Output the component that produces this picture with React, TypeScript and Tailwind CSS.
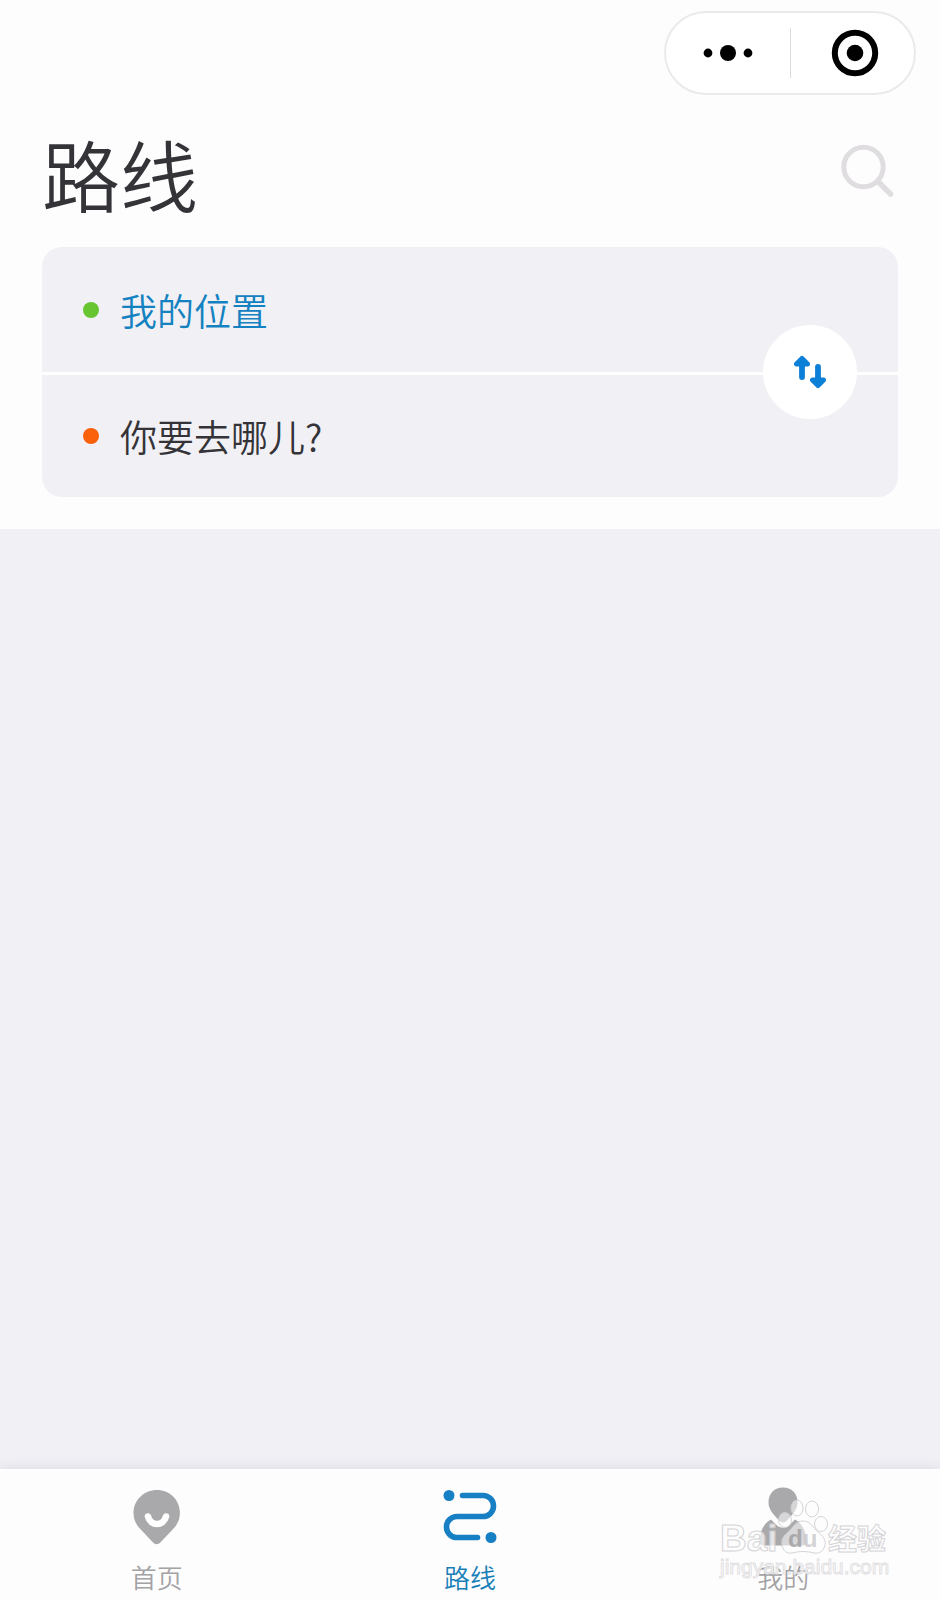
import { useState } from "react";
import type { ReactNode } from "react";

function HomeIcon() {
  return (
    <svg viewBox="0 0 56 60" className="h-15 w-14" aria-hidden="true">
      <path
        d="M28 3C15 3 4.500 13 4.500 26c0 6.500 2.600 11.800 7 16.200l12.600 13.400c2 2.200 5.200 2.200 7.200 0l12.600-13.400c4.400-4.400 7-9.700 7-16.200C50.900 13 41 3 28 3z"
        fill="#a9a8ab"
      />
      <path d="M19 29.500c2.500 10 15.500 10 18 0" fill="none" stroke="#fff" strokeWidth="6.600" strokeLinecap="round" />
    </svg>
  );
}

function RouteIcon() {
  return (
    <svg viewBox="0 0 56 60" className="h-15 w-14" aria-hidden="true" fill="#177fc4">
      <circle cx="7" cy="8.500" r="5.500" />
      <circle cx="49" cy="50.500" r="5.500" />
      <path
        d="M20.500 8.500H41a10.500 10.500 0 0 1 0 21H15a10.500 10.500 0 0 0 0 21h20.500"
        fill="none"
        stroke="#177fc4"
        strokeWidth="5.600"
        strokeLinecap="round"
      />
    </svg>
  );
}

function UserIcon() {
  return (
    <svg viewBox="0 0 56 60" className="h-15 w-14" aria-hidden="true" fill="#a9a8ab">
      <path d="M28 0.500C19.500 0.500 13.500 6.500 13.500 15c0 6 3 10 6.500 14l4 4.500c2.400 2.600 5.600 2.600 8 0l4-4.500c3.500-4 6.500-8 6.500-14C42.500 6.500 36.500 0.500 28 0.500z" />
      <path d="M16 32.500C9 36.500 5 43.500 4.500 54c0 3 1.500 4.500 5 4.500h37c3.500 0 5-1.500 5-4.500C51 43.500 47 36.500 40 32.500l-5.500 5.500c-3.800 3.600-9.200 3.600-13 0z" />
    </svg>
  );
}

const tabs: { id: string; label: string; icon: ReactNode }[] = [
  { id: "home", label: "首页", icon: <HomeIcon /> },
  { id: "route", label: "路线", icon: <RouteIcon /> },
  { id: "mine", label: "我的", icon: <UserIcon /> },
];

function Capsule() {
  return (
    <div className="flex h-[84px] w-[252px] items-center rounded-full border-2 border-[#ebe9ec] bg-white">
      <button type="button" aria-label="更多" className="flex h-full w-1/2 items-center justify-center">
        <svg viewBox="0 0 50 18" className="h-[18px] w-[50px]" aria-hidden="true">
          <circle cx="5" cy="9" r="4.400" />
          <circle cx="25" cy="9" r="8" />
          <circle cx="45" cy="9" r="4.400" />
        </svg>
      </button>
      <span className="h-[50px] w-px bg-[#dcdadd]" />
      <button type="button" aria-label="关闭" className="flex h-full flex-1 items-center justify-center pl-1">
        <svg viewBox="0 0 48 48" className="size-12" aria-hidden="true">
          <circle cx="24" cy="24" r="20.200" fill="none" stroke="#000" strokeWidth="6" />
          <circle cx="24" cy="24" r="8.300" />
        </svg>
      </button>
    </div>
  );
}

function RoutePanel() {
  const [from, setFrom] = useState("我的位置");
  const [to, setTo] = useState("");
  const swap = () => {
    setFrom(to);
    setTo(from);
  };
  return (
    <section className="relative rounded-[20px] bg-[#f1f0f5]">
      <div className="flex h-[125px] items-center pl-[41px]">
        <span className="size-4 rounded-full bg-[#67c532]" />
        <input
          aria-label="起点"
          value={from}
          onChange={(e) => setFrom(e.target.value)}
          className="ml-[21px] w-3/5 bg-transparent text-[37px] leading-[52px] font-[350] text-[#1482c0] outline-none"
        />
      </div>
      <div className="flex h-[125px] items-center border-t-3 border-white pl-[41px]">
        <span className="size-4 rounded-full bg-[#fb600b]" />
        <input
          aria-label="终点"
          value={to}
          placeholder="你要去哪儿?"
          onChange={(e) => setTo(e.target.value)}
          className="ml-[21px] w-3/5 bg-transparent text-[37px] leading-[52px] font-[350] text-[#343338] outline-none placeholder:text-[#343338]"
        />
      </div>
      <button
        type="button"
        aria-label="交换起点和终点"
        onClick={swap}
        className="absolute top-1/2 right-[41px] flex size-[94px] -translate-y-1/2 items-center justify-center rounded-full bg-white"
      >
        <svg viewBox="0 0 34 34" className="size-[34px]" aria-hidden="true" fill="#0c7fd6" stroke="#0c7fd6" strokeLinecap="round" strokeLinejoin="round">
          <path d="M9 3.500 3.500 9h11z" strokeWidth="5" />
          <path d="M9 9v13" strokeWidth="5.800" />
          <path d="M25 30.500 19.500 25h11z" strokeWidth="5" />
          <path d="M25 25V12" strokeWidth="5.800" />
        </svg>
      </button>
    </section>
  );
}

function Watermark() {
  return (
    <div className="pointer-events-none absolute right-[50px] bottom-5 w-[170px] opacity-90">
      <svg viewBox="0 0 170 84" className="w-full overflow-visible" aria-hidden="true">
        <g fill="#fff" fillOpacity="0.600" stroke="#d0cfd2" strokeWidth="1">
          <path d="M83 25c-8 0-10 7-15 11-5 4-7 8-6 13 1 6 5 9 10 8 8-2 14-2 22 0 5 1 10-2 11-8 1-5-2-9-7-13-5-4-7-11-15-11z" />
          <ellipse cx="77" cy="12" rx="6" ry="8" />
          <ellipse cx="92" cy="13" rx="6.500" ry="8" />
          <ellipse cx="65" cy="24" rx="6.500" ry="7.500" />
          <ellipse cx="101" cy="28" rx="6.500" ry="7.500" />
        </g>
        <g className="font-['Liberation_Sans','Noto_Sans_CJK_SC',sans-serif] font-bold" fill="#fff" stroke="#d0cfd2" strokeWidth="1">
          <text x="0" y="55" fontSize="37" fillOpacity="0.800">Bai</text>
          <text x="68" y="51" fontSize="24" stroke="none" fill="#a9a8ab">
            d<tspan fill="#cfced1">u</tspan>
          </text>
          <text x="108" y="54" fontSize="29">经验</text>
        </g>
        <text x="0" y="78" fontSize="21" fill="#fff" stroke="#dedde0" strokeWidth="1" className="font-['Liberation_Sans',sans-serif]">
          jingyan.baidu.com
        </text>
      </svg>
    </div>
  );
}

export default function App() {
  const [active, setActive] = useState("route");
  return (
    <div className="flex min-h-screen flex-col bg-[#f1f0f5] font-['Noto_Sans_CJK_SC',sans-serif] text-[#343338]">
      <header className="bg-[#fefdfe] pb-8">
        <div className="flex justify-end pt-[11px] pr-6">
          <Capsule />
        </div>
        <div className="flex items-start justify-between px-[42px] pt-[18px]">
          <h1 className="text-[78px] leading-[120px] font-[350]">路线</h1>
          <button type="button" aria-label="搜索" className="pt-[30px]">
            <svg viewBox="0 0 58 58" className="size-[58px]" aria-hidden="true" fill="none" stroke="#dfdde0" strokeWidth="5" strokeLinecap="round">
              <circle cx="23.500" cy="24" r="19.700" />
              <path d="M38 38.500 50.500 51" strokeWidth="5.500" />
            </svg>
          </button>
        </div>
        <div className="px-[42px] pt-[14px]">
          <RoutePanel />
        </div>
      </header>

      <main className="flex-1" />

      <nav className="relative grid grid-cols-3 bg-[#fefdfe] pt-[18px] pb-1 shadow-[0_0_12px_rgba(90,80,110,0.14)]">
        {tabs.map((tab) => (
          <button
            key={tab.id}
            type="button"
            onClick={() => setActive(tab.id)}
            aria-current={active === tab.id ? "page" : undefined}
            className={
              "flex flex-col items-center gap-[11px] text-[26px] leading-[38px] font-[350] " +
              (active === tab.id ? "text-[#177fb8]" : "text-[#a3a2a5]")
            }
          >
            {tab.icon}
            <span>{tab.label}</span>
          </button>
        ))}
        <Watermark />
      </nav>
    </div>
  );
}
